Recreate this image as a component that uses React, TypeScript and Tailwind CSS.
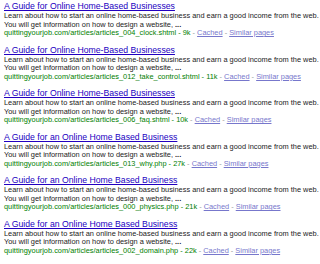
import React from "react";

const items = [
  { t: "A Guide for Online Home-Based Businesses", u: "quittingyourjob.com/articles/articles_004_clock.shtml", s: "9k" },
  { t: "A Guide for Online Home-Based Businesses", u: "quittingyourjob.com/articles/articles_012_take_control.shtml", s: "11k" },
  { t: "A Guide for Online Home-Based Businesses", u: "quittingyourjob.com/articles/articles_006_faq.shtml", s: "10k" },
  { t: "A Guide for an Online Home Based Business", u: "quittingyourjob.com/articles/articles_013_why.php", s: "27k" },
  { t: "A Guide for an Online Home Based Business", u: "quittingyourjob.com/articles/articles_000_physics.php", s: "21k" },
  { t: "A Guide for an Online Home Based Business", u: "quittingyourjob.com/articles/articles_002_domain.php", s: "22k" },
];

export default function App() {
  return (
    <div className="w-[320px] h-[264px] bg-white overflow-hidden pl-[4px] pt-[1px]" style={{ fontFamily: '"Liberation Sans", Arial, sans-serif' }}>
      <div className="flex flex-col gap-[7.1px]">
        {items.map((it, i) => (
          <div key={i} className="flex flex-col">
            <a className="text-[8.7px] leading-[11px] text-[#2200c1] underline whitespace-nowrap">{it.t}</a>
            <div className="text-[7.4px] leading-[8.5px] text-[#222] whitespace-nowrap">
              Learn about how to start an online home-based business and earn a good income from the web.
              <br />
              You will get information on how to design a website, <b>...</b>
            </div>
            <div className="text-[7.4px] leading-[8.5px] whitespace-nowrap">
              <span className="text-[#008000]">{it.u} - {it.s}</span>
              <span className="text-[#999]"> - </span>
              <a className="text-[#7777cc] underline">Cached</a>
              <span className="text-[#999]"> - </span>
              <a className="text-[#7777cc] underline">Similar pages</a>
            </div>
          </div>
        ))}
      </div>
    </div>
  );
}
